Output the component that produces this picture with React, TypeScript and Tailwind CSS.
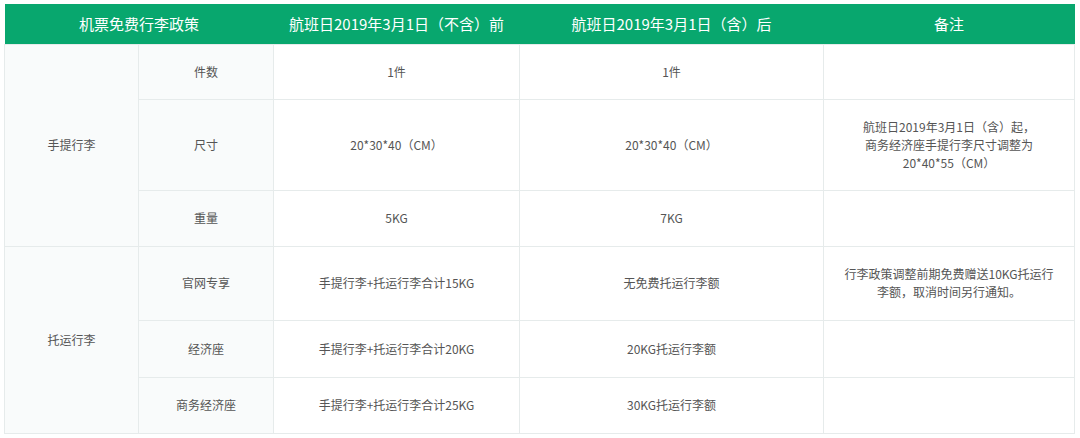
import React from "react";

const font = { fontFamily: '"Noto Sans CJK SC", "Noto Sans", sans-serif' };

const cell = "border border-[#e6ebeb] text-center align-middle text-[12px] text-[#555] leading-[18px]";
const label = cell + " bg-[#f9fbfb]";

export default function App() {
  return (
    <div className="bg-white w-[1080px] h-[438px] pt-[4px] pl-[4px]" style={font}>
      <table className="border-collapse table-fixed w-[1070px]">
        <colgroup>
          <col className="w-[134px]" />
          <col className="w-[135px]" />
          <col className="w-[246px]" />
          <col className="w-[304px]" />
          <col className="w-[251px]" />
        </colgroup>
        <thead>
          <tr className="h-[40px] bg-[#08a76e] text-white text-[15px]">
            <th colSpan={2} className="font-normal">机票免费行李政策</th>
            <th className="font-normal">航班日2019年3月1日（不含）前</th>
            <th className="font-normal">航班日2019年3月1日（含）后</th>
            <th className="font-normal">备注</th>
          </tr>
        </thead>
        <tbody>
          <tr className="h-[55px]">
            <td rowSpan={3} className={label}>手提行李</td>
            <td className={label}>件数</td>
            <td className={cell}>1件</td>
            <td className={cell}>1件</td>
            <td className={cell}></td>
          </tr>
          <tr className="h-[91px]">
            <td className={label}>尺寸</td>
            <td className={cell}>20*30*40（CM）</td>
            <td className={cell}>20*30*40（CM）</td>
            <td className={cell}>
              航班日2019年3月1日（含）起，
              <br />
              商务经济座手提行李尺寸调整为
              <br />
              20*40*55（CM）
            </td>
          </tr>
          <tr className="h-[56px]">
            <td className={label}>重量</td>
            <td className={cell}>5KG</td>
            <td className={cell}>7KG</td>
            <td className={cell}></td>
          </tr>
          <tr className="h-[74px]">
            <td rowSpan={3} className={label}>托运行李</td>
            <td className={label}>官网专享</td>
            <td className={cell}>手提行李+托运行李合计15KG</td>
            <td className={cell}>无免费托运行李额</td>
            <td className={cell + " px-[20px]"}>
              行李政策调整前期免费赠送10KG托运行
              <br />
              李额，取消时间另行通知。
            </td>
          </tr>
          <tr className="h-[57px]">
            <td className={label}>经济座</td>
            <td className={cell}>手提行李+托运行李合计20KG</td>
            <td className={cell}>20KG托运行李额</td>
            <td className={cell}></td>
          </tr>
          <tr className="h-[56px]">
            <td className={label}>商务经济座</td>
            <td className={cell}>手提行李+托运行李合计25KG</td>
            <td className={cell}>30KG托运行李额</td>
            <td className={cell}></td>
          </tr>
        </tbody>
      </table>
    </div>
  );
}
